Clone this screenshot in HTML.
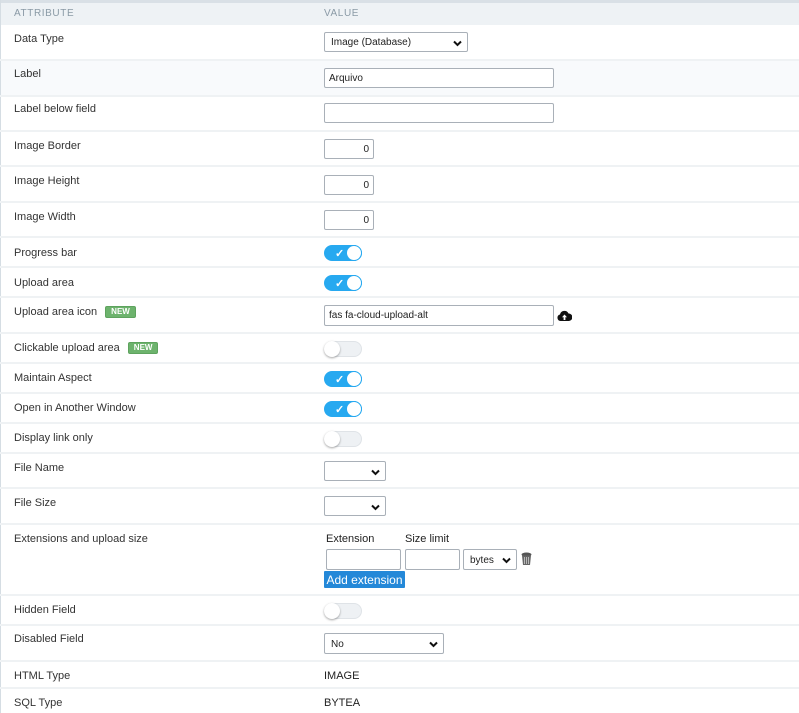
<!DOCTYPE html>
<html><head><meta charset="utf-8"><style>
body{margin:0;width:799px;height:713px;overflow:hidden;background:#fff;font-family:"Liberation Sans",Arial,sans-serif;position:relative}
.a{position:absolute}
.l{position:absolute;left:14px;font-size:11px;line-height:14px;color:#333;margin-top:1px}
.sep{position:absolute;left:0;width:799px;height:2px;background:#eff2f4}
.in{position:absolute;box-sizing:border-box;border:1px solid #a9b0b8;border-radius:2px;background:#fff;font-size:10px;line-height:19px;padding:0 4px;color:#222}
.sel{position:absolute;box-sizing:border-box;border:1px solid #a9b0b8;border-radius:2px;background:#fff;font-size:10px;color:#222;padding:0 6px;line-height:19px}
.sel svg{position:absolute;right:5px;top:7px}
.num{text-align:right}
.tg{position:absolute;left:324px;width:38px;height:16px;border-radius:8px;box-sizing:border-box}
.on{background:#27a9f0}
.on:after{content:"";position:absolute;right:0;top:0;width:16px;height:16px;border-radius:50%;background:#fff;box-sizing:border-box;border:1.5px solid #27a9f0}
.on span{position:absolute;left:11px;top:1px;color:#fff;font-size:11px;line-height:16px;font-weight:bold}
.off{background:#eef1f4;border:1px solid #dfe3e7}
.off:after{content:"";position:absolute;left:-1px;top:-1px;width:16px;height:16px;border-radius:50%;background:#fff;box-shadow:0 1px 2px rgba(0,0,0,.35)}
.new{display:inline-block;background:#6db36d;color:#fff;font-size:8px;font-weight:bold;line-height:10px;padding:0 5px;border-radius:2px;margin-left:8px;vertical-align:1px;border:1px solid #5ea35e}
</style></head><body>
<div class="a" style="left:0;top:0;width:799px;height:3px;background:#d9e0e6"></div>
<div class="a" style="left:0;top:3px;width:799px;height:22px;background:#eef2f5"></div>
<div class="a" style="left:0;top:0;width:1px;height:713px;background:#d5dde3"></div>
<div class="a" style="left:14px;top:8px;font-size:10px;letter-spacing:.6px;color:#8a9aa6;line-height:12px">ATTRIBUTE</div>
<div class="a" style="left:324px;top:8px;font-size:10px;letter-spacing:.6px;color:#8a9aa6;line-height:12px">VALUE</div>
<div class="a" style="left:1px;top:61px;width:798px;height:35px;background:#f8fafc"></div>

<div class="sep" style="top:59px"></div><div class="sep" style="top:95px"></div><div class="sep" style="top:130px"></div><div class="sep" style="top:165px"></div><div class="sep" style="top:201px"></div><div class="sep" style="top:236px"></div><div class="sep" style="top:266px"></div><div class="sep" style="top:296px"></div><div class="sep" style="top:332px"></div><div class="sep" style="top:362px"></div><div class="sep" style="top:392px"></div><div class="sep" style="top:422px"></div><div class="sep" style="top:452px"></div><div class="sep" style="top:487px"></div><div class="sep" style="top:523px"></div><div class="sep" style="top:594px"></div><div class="sep" style="top:624px"></div><div class="sep" style="top:660px"></div><div class="sep" style="top:687px"></div>

<div class="l" style="top:31px">Data Type</div>
<div class="l" style="top:66px">Label</div>
<div class="l" style="top:101px">Label below field</div>
<div class="l" style="top:138px">Image Border</div>
<div class="l" style="top:173px">Image Height</div>
<div class="l" style="top:209px">Image Width</div>
<div class="l" style="top:245px">Progress bar</div>
<div class="l" style="top:275px">Upload area</div>
<div class="l" style="top:304px">Upload area icon<span class="new">NEW</span></div>
<div class="l" style="top:340px">Clickable upload area<span class="new">NEW</span></div>
<div class="l" style="top:370px">Maintain Aspect</div>
<div class="l" style="top:400px">Open in Another Window</div>
<div class="l" style="top:430px">Display link only</div>
<div class="l" style="top:460px">File Name</div>
<div class="l" style="top:495px">File Size</div>
<div class="l" style="top:531px">Extensions and upload size</div>
<div class="l" style="top:602px">Hidden Field</div>
<div class="l" style="top:631px">Disabled Field</div>
<div class="l" style="top:668px">HTML Type</div>
<div class="l" style="top:695px">SQL Type</div>

<div class="sel" style="left:324px;top:32px;width:144px;height:20px">Image (Database)<svg width="9" height="7" viewBox="0 0 9 7"><path d="M1 1.5L4.5 5 8 1.5" stroke="#111" stroke-width="2" fill="none"/></svg></div>
<div class="in" style="left:324px;top:68px;width:230px;height:20px">Arquivo</div>
<div class="in" style="left:324px;top:103px;width:230px;height:20px"></div>
<div class="in num" style="left:324px;top:139px;width:50px;height:20px">0</div>
<div class="in num" style="left:324px;top:175px;width:50px;height:20px">0</div>
<div class="in num" style="left:324px;top:210px;width:50px;height:20px">0</div>

<div class="tg on" style="top:245px"><span>✓</span></div>
<div class="tg on" style="top:275px"><span>✓</span></div>
<div class="in" style="left:324px;top:305px;width:230px;height:21px">fas fa-cloud-upload-alt</div>
<svg class="a" style="left:557px;top:310px" width="15" height="11" viewBox="0 0 15 11"><path d="M3.5 11A3.3 3.3 0 0 1 3 4.5 4.5 4.5 0 0 1 11.5 3.5 3.5 3.5 0 0 1 11.8 11Z" fill="#111"/><path d="M7.5 4.5L5 7.2h1.6V10h1.8V7.2H10Z" fill="#fff"/></svg>
<div class="tg off" style="top:341px"></div>
<div class="tg on" style="top:371px"><span>✓</span></div>
<div class="tg on" style="top:401px"><span>✓</span></div>
<div class="tg off" style="top:431px"></div>
<div class="sel" style="left:324px;top:461px;width:62px;height:20px"><svg width="9" height="7" viewBox="0 0 9 7"><path d="M1 1.5L4.5 5 8 1.5" stroke="#111" stroke-width="2" fill="none"/></svg></div>
<div class="sel" style="left:324px;top:496px;width:62px;height:20px"><svg width="9" height="7" viewBox="0 0 9 7"><path d="M1 1.5L4.5 5 8 1.5" stroke="#111" stroke-width="2" fill="none"/></svg></div>

<div class="a" style="left:326px;top:533px;font-size:11px;color:#222">Extension</div>
<div class="a" style="left:405px;top:533px;font-size:11px;color:#222">Size limit</div>
<div class="in" style="left:326px;top:549px;width:75px;height:21px"></div>
<div class="in" style="left:405px;top:549px;width:55px;height:21px"></div>
<div class="sel" style="left:463px;top:549px;width:54px;height:21px;line-height:21px">bytes<svg width="9" height="7" viewBox="0 0 9 7"><path d="M1 1.5L4.5 5 8 1.5" stroke="#111" stroke-width="2" fill="none"/></svg></div>
<svg class="a" style="left:521px;top:552px" width="11" height="14" viewBox="0 0 11 14"><ellipse cx="5.5" cy="2.5" rx="5" ry="2" fill="#555"/><path d="M1 3.5h9l-1 9.5H2Z" fill="#666"/><path d="M3.5 5v7M5.5 5v7M7.5 5v7" stroke="#ccc" stroke-width=".8"/></svg>
<div class="a" style="left:324px;top:571px;width:81px;height:17px;background:#2488d8;color:#fff;font-size:12px;line-height:18px;text-align:center;border-radius:1px">Add extension</div>

<div class="tg off" style="top:603px"></div>
<div class="sel" style="left:324px;top:633px;width:120px;height:21px;line-height:21px">No<svg width="9" height="7" viewBox="0 0 9 7"><path d="M1 1.5L4.5 5 8 1.5" stroke="#111" stroke-width="2" fill="none"/></svg></div>
<div class="a" style="left:324px;top:669px;font-size:11px;color:#222;line-height:14px">IMAGE</div>
<div class="a" style="left:324px;top:696px;font-size:11px;color:#222;line-height:14px">BYTEA</div>
</body></html>
